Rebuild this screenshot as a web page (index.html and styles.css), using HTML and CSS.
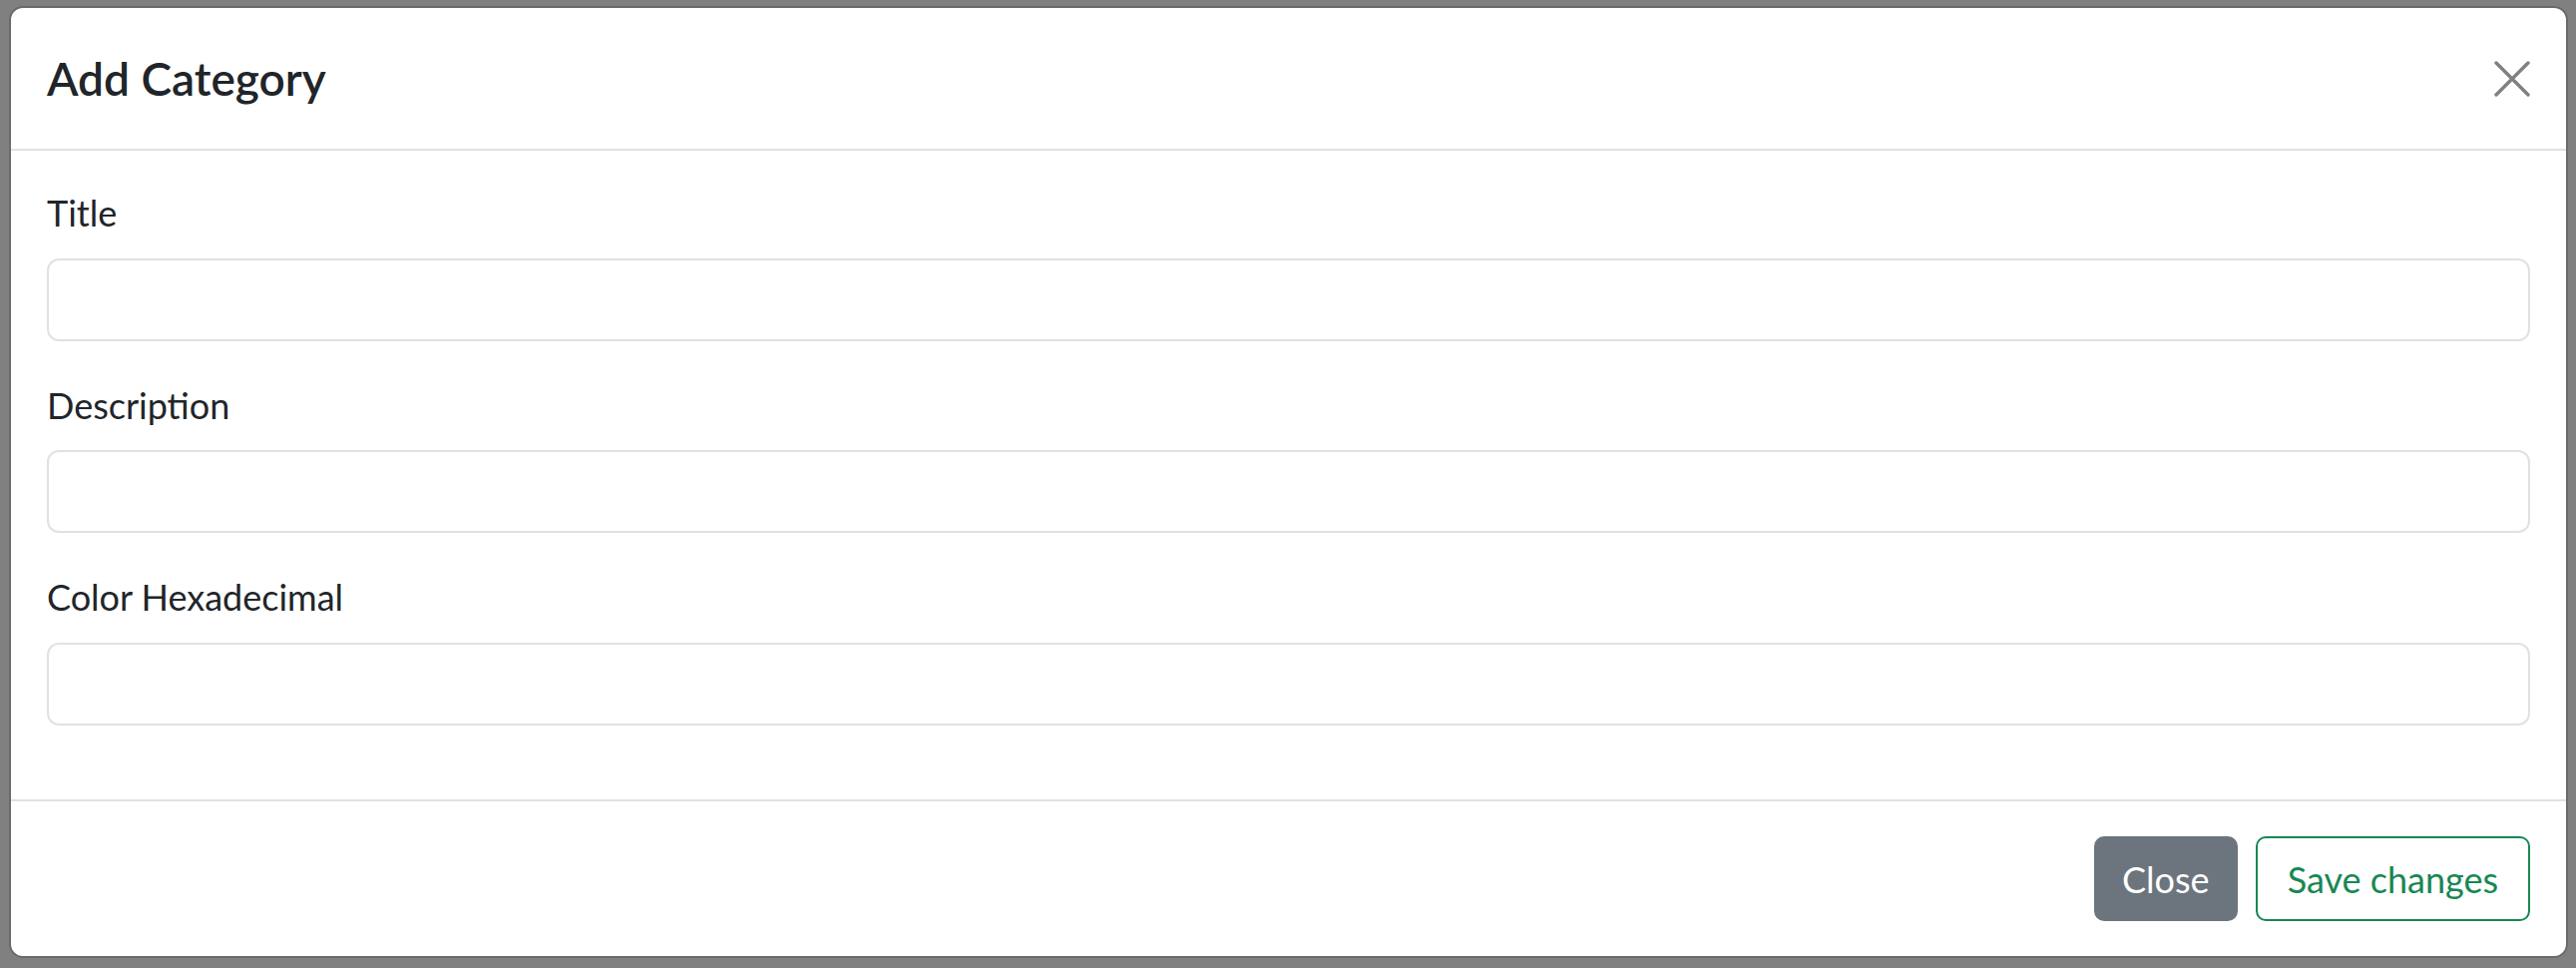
FILE: index.html
```html
<!DOCTYPE html>
<html lang="en">
<head>
<meta charset="utf-8">
<title>Add Category</title>
<link rel="stylesheet" href="styles.css">
</head>
<body>
<div class="modal">
  <div class="modal-header">
    <h5 class="modal-title">Add Category</h5>
    <button class="btn-close" type="button" aria-label="Close">
      <svg viewBox="0 0 36 36" width="36" height="36" aria-hidden="true">
        <path d="M2 2 L34 34 M34 2 L2 34" stroke="#808080" stroke-width="3.4" stroke-linecap="round" fill="none"/>
      </svg>
    </button>
  </div>
  <div class="modal-body">
    <div class="field">
      <label class="label" for="title">Title</label>
      <input class="input" id="title" type="text">
    </div>
    <div class="field">
      <label class="label" for="description">Description</label>
      <input class="input" id="description" type="text">
    </div>
    <div class="field">
      <label class="label" for="color">Color Hexadecimal</label>
      <input class="input" id="color" type="text">
    </div>
  </div>
  <div class="modal-footer">
    <button class="btn btn-secondary" type="button">Close</button>
    <button class="btn btn-outline-success" type="button">Save changes</button>
  </div>
</div>
</body>
</html>
```

FILE: styles.css
```css
html, body {
  margin: 0;
  height: 100%;
}

body {
  background: #808080;
  padding: 6px 8px 9px 9px;
  box-sizing: border-box;
  font-family: Lato, "Open Sans", sans-serif;
  color: #212529;
}

.modal {
  background: #ffffff;
  border: 2px solid #6a6a6a;
  border-radius: 14px;
  display: flex;
  flex-direction: column;
}

.modal-header {
  display: flex;
  align-items: center;
  justify-content: space-between;
  padding: 36px 36px;
  border-bottom: 2px solid #dee2e6;
}

.modal-title {
  margin: 0;
  font-size: 46px;
  font-weight: 600;
  line-height: 69px;
}

.btn-close {
  width: 36px;
  height: 36px;
  padding: 0;
  border: 0;
  background: none;
  display: block;
  cursor: pointer;
}

.btn-close svg {
  display: block;
}

.modal-body {
  padding: 35px 36px 37px;
}

.field {
  margin-bottom: 37px;
}

.label {
  display: block;
  font-size: 36px;
  line-height: 55.5px;
  margin-bottom: 17px;
}

.input {
  display: block;
  width: 100%;
  box-sizing: border-box;
  height: 83px;
  border: 2px solid #dee2e6;
  border-radius: 12px;
  background: #ffffff;
  font-family: inherit;
  font-size: 36px;
  padding: 0 27px;
  outline: none;
}

.modal-footer {
  display: flex;
  justify-content: flex-end;
  gap: 18px;
  padding: 35.5px 36px 35px;
  border-top: 2px solid #dee2e6;
}

.btn {
  height: 85px;
  padding: 0 28px;
  border-radius: 10px;
  font-family: inherit;
  font-size: 36px;
  line-height: 1;
  border: 2px solid transparent;
  cursor: pointer;
}

.btn-secondary {
  background: #6c757d;
  border-color: #6c757d;
  color: #ffffff;
  padding: 0 26px;
}

.btn-outline-success {
  background: #ffffff;
  border-color: #198754;
  color: #198754;
  padding: 0 30px;
}
```
